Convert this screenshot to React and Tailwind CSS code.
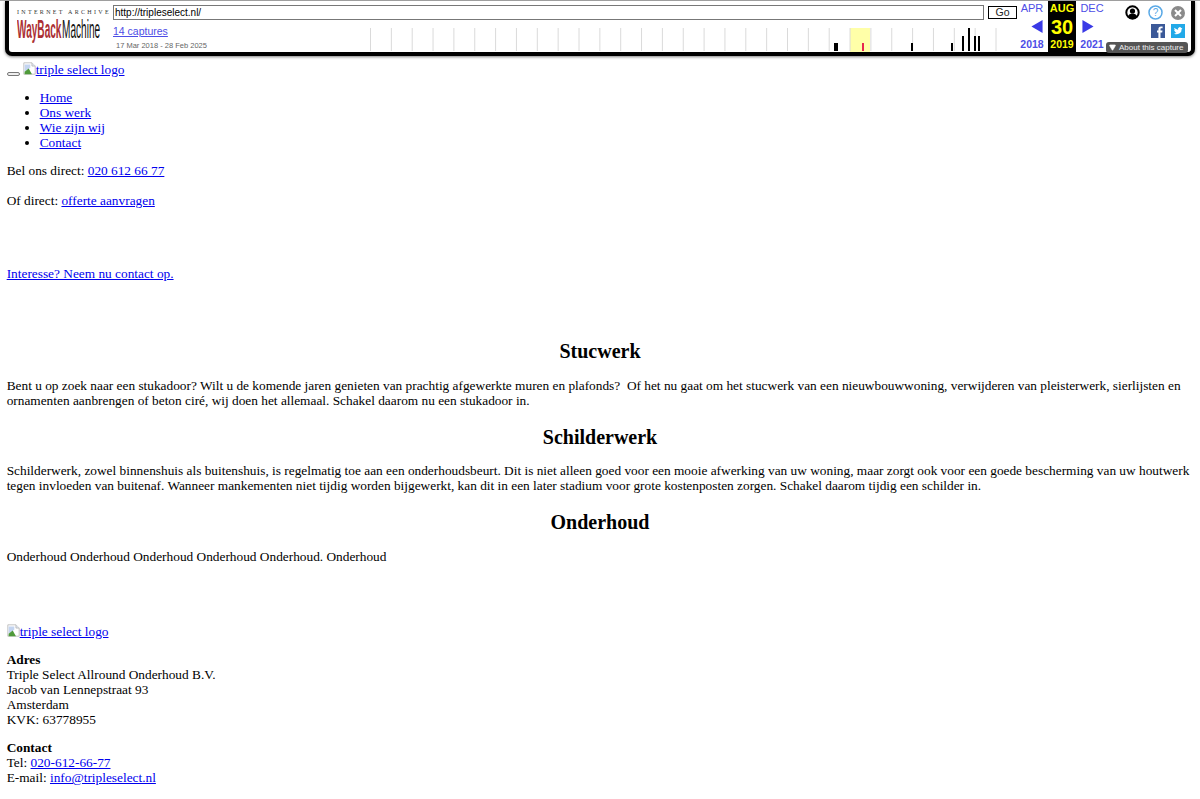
import React from 'react';
import { Triangle } from 'lucide-react';

const TICKS = Array.from({ length: 31 }, (_, i) => 0.5 + i * 20.85);
const BARS = [
  { x: 464, w: 3, top: 15 },
  { x: 541, w: 1, top: 15 },
  { x: 581, w: 1, top: 15 },
  { x: 592, w: 1, top: 8 },
  { x: 598, w: 1, top: 0 },
  { x: 604, w: 1, top: 8 },
  { x: 608, w: 1, top: 8 },
];

const BrokenImage = () => (
  <svg width="13" height="13" viewBox="0 0 16 16" className="inline-block align-[-1px]">
    <path d="M1 1h10l4 4v10H1z" fill="#fff" stroke="#b5b5b5" />
    <path d="M11 1v4h4" fill="#dfe6f2" stroke="#b5b5b5" />
    <path d="M2 3h7v4L2 12z" fill="#c3d4f0" />
    <path d="M2 15v-3l5-4 4 7z" fill="#4f9a3a" />
  </svg>
);

const Timeline = () => (
  <svg width="647" height="24" viewBox="0 0 647 24" className="block">
    <rect x="480" y="0" width="20" height="24" fill="#ffffa8" />
    {TICKS.map((x) => (
      <line key={x} x1={x} x2={x} y1="0" y2="23" stroke="#dadada" />
    ))}
    {BARS.map((b) => (
      <rect key={b.x} x={b.x} y={b.top} width={b.w + 1} height={23 - b.top} fill="#000" />
    ))}
    <rect x="492" y="15" width="2" height="8" fill="#e8264e" />
  </svg>
);

const Logo = () => (
  <div className="w-[103px] shrink-0 pl-[8px] pt-[7px]">
    <div className="font-['Liberation_Serif',serif] text-[6px] leading-[8px] tracking-[2.3px] whitespace-nowrap text-[#333]">
      INTERNET ARCHIVE
    </div>
    <div className="flex h-[23px] mt-[2px] font-['Liberation_Sans',sans-serif] font-bold text-[24px] leading-[23px]">
      <div className="w-[45px]">
        <span className="inline-block origin-left scale-x-[0.42] scale-y-[1.05] text-[#ab2f33] whitespace-nowrap">WayBack</span>
      </div>
      <div className="w-[39px]">
        <span className="inline-block origin-left scale-x-[0.42] scale-y-[1.05] text-[#111] font-normal whitespace-nowrap">Machine</span>
      </div>
    </div>
  </div>
);

const Month = ({ top, mid, bottom, arrow, active }) => (
  <div
    className={`flex flex-col items-center justify-between w-[28px] pt-[1px] pb-[1px] font-['Liberation_Sans',sans-serif] ${
      active ? 'bg-black text-[#ffff00] font-bold' : 'text-[#4d4de6]'
    }`}
  >
    <div className="text-[11px] leading-[13px]">{top}</div>
    {mid ? <div className="text-[20px] leading-[22px] font-bold">{mid}</div> : arrow}
    <div className="text-[10.5px] leading-[13px] font-bold">{bottom}</div>
  </div>
);

const Toolbar = () => (
  <div className="mx-[5px] border-x-4 border-b-4 border-black rounded-b-[7px] bg-white h-[55px] shadow-[0_1px_3px_rgba(0,0,0,0.5)] flex relative">
    <Logo />
    <div className="w-[905px] shrink-0 flex flex-col">
      <div className="flex items-center gap-[4px] pt-[4px] pl-[1px]">
        <div className="w-[871px] h-[15px] border border-[#777] font-['Liberation_Sans',sans-serif] text-[10px] leading-[13px] pl-[1px]">
          http://tripleselect.nl/
        </div>
        <button className="w-[29px] h-[13px] border border-black text-[10.5px] leading-[11px] font-['Liberation_Sans',sans-serif] text-[#222]">
          Go
        </button>
      </div>
      <div className="flex mt-[8px]">
        <div className="w-[258px] shrink-0 pl-[1px] -mt-[3px] font-['Liberation_Sans',sans-serif]">
          <a href="#" className="block text-[10.5px] leading-[13px] text-[#4d4de6] underline font-medium">14 captures</a>
          <div className="text-[7.5px] leading-[10px] mt-[3px] pl-[3px] text-[#666]">17 Mar 2018 - 28 Feb 2025</div>
        </div>
        <Timeline />
      </div>
    </div>
    <div className="flex gap-[2px] ml-[1px]">
      <Month
        top="APR"
        bottom="2018"
        arrow={
          <svg width="12" height="13" viewBox="0 0 12 14" className="translate-x-[5px]"><path d="M12 0v14L0 7z" fill="#3a3ae6" /></svg>
        }
      />
      <Month top="AUG" mid="30" bottom="2019" active />
      <Month
        top="DEC"
        bottom="2021"
        arrow={
          <svg width="12" height="13" viewBox="0 0 12 14" className="-translate-x-[4px]"><path d="M0 0v14l12-7z" fill="#3a3ae6" /></svg>
        }
      />
    </div>
    <div className="flex-1 pt-[4px] pr-[6px] flex flex-col items-end">
      <div className="flex items-center gap-[8px]">
        <svg width="15" height="15" viewBox="0 0 15 15">
          <circle cx="7.5" cy="7.5" r="6.2" fill="#fff" stroke="#000" strokeWidth="2" />
          <circle cx="7.5" cy="6" r="2.6" fill="#000" />
          <path d="M2.8 12.2c.7-3 2.6-3.7 4.7-3.7s4 .7 4.7 3.7C11 13.600 9.300 14 7.500 14s-3.500-.4-4.700-1.800z" fill="#000" />
        </svg>
        <svg width="15" height="15" viewBox="0 0 15 15">
          <circle cx="7.5" cy="7.5" r="6.5" fill="#fff" stroke="#5aa9e6" strokeWidth="1.500" />
          <text x="7.500" y="11" textAnchor="middle" fontSize="10" fontFamily="Liberation Sans, sans-serif" fill="#5aa9e6">?</text>
        </svg>
        <svg width="14" height="14" viewBox="0 0 14 14">
          <circle cx="7" cy="7" r="7" fill="#8a8a8a" />
          <path d="M4 4l6 6M10 4l-6 6" stroke="#fff" strokeWidth="2" />
        </svg>
      </div>
      <div className="flex items-center gap-[6px] mt-[4px]">
        <svg width="14" height="14" viewBox="0 0 14 14">
          <rect width="14" height="14" fill="#3b5998" />
          <path d="M9.500 14V8.500h1.700l.3-2H9.500V5.300c0-.6.2-1 1-1h1.100V2.500c-.2 0-.8-.1-1.600-.1-1.600 0-2.600 1-2.600 2.700v1.400H6v2h1.400V14z" fill="#fff" />
        </svg>
        <svg width="14" height="14" viewBox="0 0 14 14">
          <rect width="14" height="14" fill="#22a9e8" />
          <path d="M11.500 4.300c-.3.200-.7.300-1 .3.400-.2.600-.5.800-.9-.3.200-.7.300-1.100.4a1.700 1.700 0 0 0-3 1.600C5.700 5.600 4.400 4.900 3.500 3.800c-.5.800-.2 1.800.5 2.300-.3 0-.5-.1-.8-.2 0 .8.600 1.500 1.400 1.700-.2.100-.5.100-.8 0 .2.700.9 1.200 1.600 1.200A3.500 3.500 0 0 1 3 9.500 5 5 0 0 0 10.700 5c.3-.2.600-.400.800-.700z" fill="#fff" />
        </svg>
      </div>
    </div>
    {/* About this capture tab */}
    <div className="absolute right-[3px] bottom-[-1px] w-[82px] h-[11px] bg-[#555] rounded-[3px] flex items-center gap-[3px] pl-[3px] text-[#eee] font-['Liberation_Sans',sans-serif] text-[8px] leading-[11px] whitespace-nowrap">
      <Triangle className="w-[7px] h-[7px] rotate-180 fill-white text-white shrink-0" />
      About this capture
    </div>
  </div>
);

const A = ({ children }) => (
  <a href="#" className="text-[#0000ee] underline">{children}</a>
);

const App = () => (
  <div className="bg-white h-[799px] overflow-hidden font-['Liberation_Serif',serif] text-[13.33px] leading-[15px] text-black">
    <div className="border-t-[1px] border-[#aaa]">
      <Toolbar />
    </div>
    <main className="px-[6.67px]">
      <div className="flex items-end h-[15px] mt-[6px]">
        <button className="w-[13px] h-[4px] border border-[#777] rounded-[2px] bg-[#efefef] mb-[1px] mr-[3px]" />
        <a href="#" className="text-[#0000ee] underline"><BrokenImage />triple select logo</a>
      </div>
      <ul className="mt-[13px] pl-[33px] list-disc">
        <li><A>Home</A></li>
        <li><A>Ons werk</A></li>
        <li><A>Wie zijn wij</A></li>
        <li><A>Contact</A></li>
      </ul>
      <p className="mt-[13px]">Bel ons direct: <A>020 612 66 77</A></p>
      <p className="mt-[15px]">Of direct: <A>offerte aanvragen</A></p>
      <p className="mt-[58px]"><A>Interesse? Neem nu contact op.</A></p>

      <h2 className="mt-[59px] text-center text-[20px] leading-[23px] font-bold">Stucwerk</h2>
      <p className="mt-[15px]">
        Bent u op zoek naar een stukadoor? Wilt u de komende jaren genieten van prachtig afgewerkte muren en plafonds?&nbsp; Of het nu gaat om het stucwerk van een nieuwbouwwoning, verwijderen van pleisterwerk, sierlijsten en ornamenten aanbrengen of beton ciré, wij doen het allemaal. Schakel daarom nu een stukadoor in.
      </p>
      <h2 className="mt-[18px] text-center text-[20px] leading-[23px] font-bold">Schilderwerk</h2>
      <p className="mt-[14px]">
        Schilderwerk, zowel binnenshuis als buitenshuis, is regelmatig toe aan een onderhoudsbeurt. Dit is niet alleen goed voor een mooie afwerking van uw woning, maar zorgt ook voor een goede bescherming van uw houtwerk tegen invloeden van buitenaf. Wanneer mankementen niet tijdig worden bijgewerkt, kan dit in een later stadium voor grote kostenposten zorgen. Schakel daarom tijdig een schilder in.
      </p>
      <h2 className="mt-[18px] text-center text-[20px] leading-[23px] font-bold">Onderhoud</h2>
      <p className="mt-[15px]">Onderhoud Onderhoud Onderhoud Onderhoud Onderhoud. Onderhoud</p>

      <p className="mt-[60px]"><a href="#" className="text-[#0000ee] underline"><BrokenImage />triple select logo</a></p>
      <p className="mt-[13px]">
        <b>Adres</b><br />
        Triple Select Allround Onderhoud B.V.<br />
        Jacob van Lennepstraat 93<br />
        Amsterdam<br />
        KVK: 63778955
      </p>
      <p className="mt-[13px]">
        <b>Contact</b><br />
        Tel: <A>020-612-66-77</A><br />
        E-mail: <A>info@tripleselect.nl</A>
      </p>
    </main>
  </div>
);

export default App;
